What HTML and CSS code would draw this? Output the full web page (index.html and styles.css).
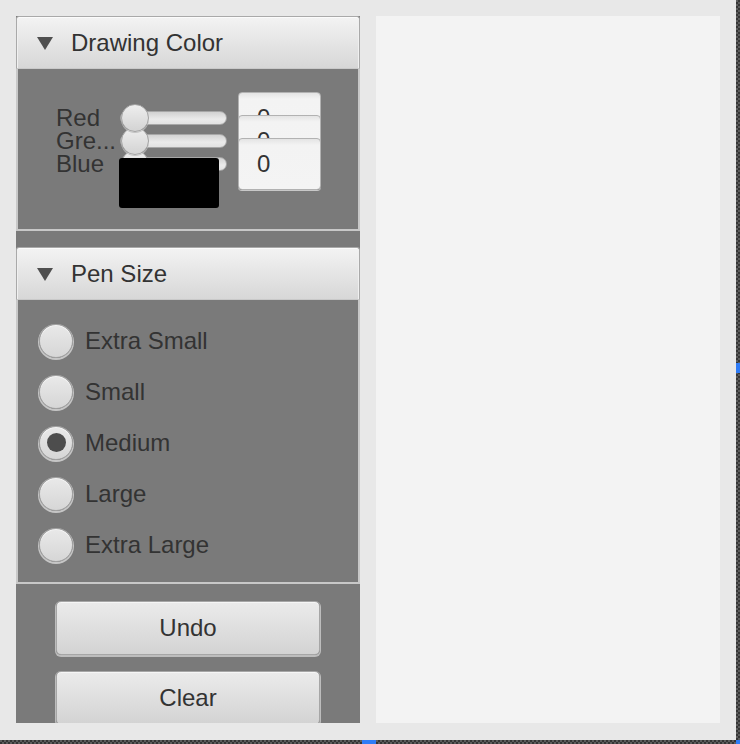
FILE: index.html
```html
<!DOCTYPE html>
<html>
<head>
<meta charset="utf-8">
<link rel="stylesheet" href="styles.css">
</head>
<body>
<div class="frame">
  <div class="window">
    <div class="side">
      <section class="pane">
        <div class="pane-head"><span class="arrow"></span><span class="pane-title">Drawing Color</span></div>
        <div class="pane-body color-body">
          <div class="color-grid">
            <div class="lbl">Red</div>
            <div class="slider s1"><div class="track"></div><div class="thumb"></div></div>
            <div class="field f1">0</div>
            <div class="lbl">Gre...</div>
            <div class="slider s2"><div class="track"></div><div class="thumb"></div></div>
            <div class="field f2">0</div>
            <div class="lbl">Blue</div>
            <div class="slider s3"><div class="track"></div><div class="thumb"></div></div>
            <div class="field f3">0</div>
            <div class="swatch"></div>
          </div>
        </div>
      </section>
      <section class="pane">
        <div class="pane-head"><span class="arrow"></span><span class="pane-title">Pen Size</span></div>
        <div class="pane-body pen-body">
          <div class="radio-row"><span class="radio"></span><span class="rlabel">Extra Small</span></div>
          <div class="radio-row"><span class="radio"></span><span class="rlabel">Small</span></div>
          <div class="radio-row"><span class="radio checked"></span><span class="rlabel">Medium</span></div>
          <div class="radio-row"><span class="radio"></span><span class="rlabel">Large</span></div>
          <div class="radio-row"><span class="radio"></span><span class="rlabel">Extra Large</span></div>
        </div>
      </section>
      <div class="actions">
        <div class="btn">Undo</div>
        <div class="btn">Clear</div>
      </div>
    </div>
    <div class="canvas"></div>
  </div>
  <span class="handle h-right"></span>
  <span class="handle h-bottom"></span>
  <span class="handle h-corner"></span>
</div>
</body>
</html>
```
FILE: styles.css
```css
html, body {
  margin: 0;
  padding: 0;
}
body {
  width: 740px;
  height: 744px;
  overflow: hidden;
  font-family: "Liberation Sans", Arial, sans-serif;
  color: #333333;
  background: repeating-conic-gradient(#353535 0 25%, #5c5c5c 0 50%) 0 0 / 4px 4px;
}
.frame {
  position: relative;
  width: 740px;
  height: 744px;
}
.window {
  width: 736px;
  height: 740px;
  box-sizing: border-box;
  background: #e8e8e8;
  padding: 16px 16px 17px 16px;
  display: flex;
  gap: 16px;
}
.side {
  width: 344px;
  height: 707px;
  background: #7a7a7a;
  display: flex;
  flex-direction: column;
  overflow: hidden;
}
.canvas {
  width: 344px;
  height: 707px;
  background: #f3f3f3;
}
.pane + .pane {
  margin-top: 16px;
}
.pane-head {
  height: 53px;
  box-sizing: border-box;
  border: 1px solid #a9a9a9;
  border-bottom: 1px solid #c9c9c9;
  border-radius: 3px 3px 0 0;
  background: linear-gradient(#f3f3f3, #d7d7d7);
  box-shadow: inset 0 1px 0 #fbfbfb, inset 1px 0 0 #f0f0f0, inset -1px 0 0 #f0f0f0;
  display: flex;
  align-items: center;
  padding-left: 20px;
}
.arrow {
  width: 0;
  height: 0;
  border-left: 8px solid transparent;
  border-right: 8px solid transparent;
  border-top: 13px solid #4f4f4f;
  margin-right: 18px;
  margin-top: 2px;
}
.pane-title {
  font-size: 24px;
  color: #333333;
}
.pane-body {
  box-sizing: border-box;
  border: 2px solid #c8c8c8;
  border-top: none;
  background: #7a7a7a;
}
.color-body {
  height: 162px;
  padding: 37px 0 0 38px;
}
.color-grid {
  display: grid;
  grid-template-columns: 64px 118px 83px;
  grid-template-rows: 23px 23px 23px 16px;
  align-items: center;
}
.lbl {
  font-size: 24px;
  line-height: 23px;
  height: 23px;
  color: #333333;
  white-space: nowrap;
}
.slider {
  position: relative;
  width: 107px;
  height: 28px;
  display: flex;
  align-items: center;
}
.s1 { z-index: 3; }
.s2 { z-index: 2; }
.s3 { z-index: 1; }
.track {
  width: 107px;
  height: 14px;
  box-sizing: border-box;
  border: 1px solid #a7a7a7;
  border-radius: 7px;
  background: linear-gradient(#d2d2d2, #ebebeb 60%, #e2e2e2);
}
.thumb {
  position: absolute;
  left: 1px;
  top: 0;
  width: 28px;
  height: 28px;
  box-sizing: border-box;
  border-radius: 50%;
  border: 1px solid #a2a2a2;
  background: linear-gradient(#eeeeee, #d3d3d3);
  box-shadow: 0 1px 0 #c4c4c4;
}
.field {
  width: 83px;
  height: 52px;
  box-sizing: border-box;
  border: 1px solid #b2b2b2;
  border-radius: 4px;
  background: linear-gradient(#e4e4e4, #f3f3f3 6px, #f4f4f4);
  box-shadow: 0 1px 0 #c8c8c8;
  font-size: 24px;
  line-height: 50px;
  padding-left: 18px;
  color: #333333;
  position: relative;
}
.f1 { z-index: 1; }
.f2 { z-index: 2; }
.f3 { z-index: 3; }
.swatch {
  grid-column: 2;
  grid-row: 4;
  width: 100px;
  height: 50px;
  margin-left: -1px;
  background: #000000;
  border-radius: 3px;
  position: relative;
  z-index: 5;
}
.pen-body {
  height: 284px;
  padding: 15px 0 0 21px;
}
.radio-row {
  height: 51px;
  display: flex;
  align-items: center;
  gap: 12px;
}
.radio {
  width: 34px;
  height: 34px;
  box-sizing: border-box;
  border-radius: 50%;
  border: 1px solid #a4a4a4;
  background: linear-gradient(#e9e9e9, #d6d6d6);
  box-shadow: 0 1px 0 1px #c6c6c6, inset 0 1px 0 #f4f4f4;
  display: flex;
  align-items: center;
  justify-content: center;
}
.radio.checked::after {
  content: "";
  width: 19px;
  height: 19px;
  border-radius: 50%;
  background: #4d4d4d;
}
.rlabel {
  font-size: 24px;
  color: #333333;
}
.actions {
  padding: 17px 0 0 40px;
  display: flex;
  flex-direction: column;
  gap: 16px;
}
.btn {
  width: 264px;
  height: 54px;
  flex: none;
  box-sizing: border-box;
  border: 1px solid #a6a6a6;
  border-radius: 5px;
  background: linear-gradient(#ebebeb, #d3d3d3);
  box-shadow: 0 1px 0 1px #bdbdbd, inset 0 1px 0 #f6f6f6;
  font-size: 24px;
  line-height: 52px;
  text-align: center;
  color: #333333;
}
.handle {
  position: absolute;
  background: #2f7cf6;
}
.h-right {
  left: 736px;
  top: 363px;
  width: 4px;
  height: 10px;
}
.h-bottom {
  left: 362px;
  top: 740px;
  width: 14px;
  height: 4px;
}
.h-corner {
  left: 736px;
  top: 740px;
  width: 4px;
  height: 4px;
}
```
